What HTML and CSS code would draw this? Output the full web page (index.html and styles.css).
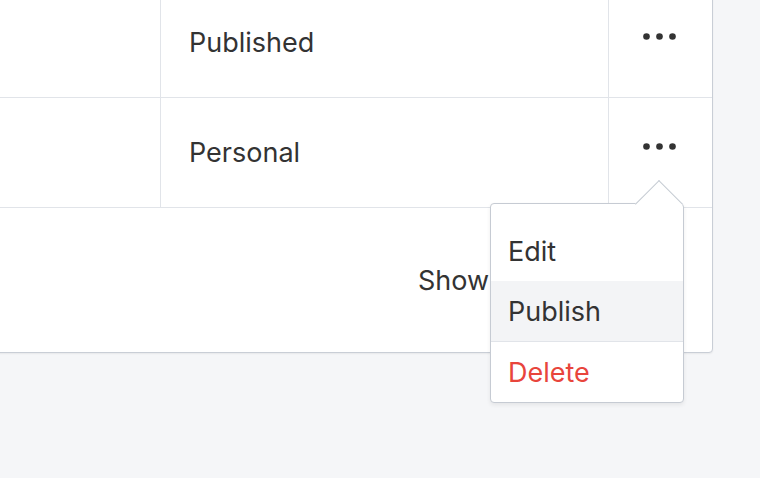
FILE: index.html
```html
<!DOCTYPE html>
<html>
<head>
  <meta charset="UTF-8">
  <title>Posts</title>
  <link rel="stylesheet" href="styles.css">
</head>
<body>
  <div class="card">
    <div class="row">
      <div class="cell"></div>
      <div class="cell status">Published</div>
      <div class="cell actions">
        <button class="more-btn" aria-label="More">
          <svg width="33" height="7" viewBox="0 0 33 7"><circle cx="3.5" cy="3.5" r="3.3"/><circle cx="16.5" cy="3.5" r="3.3"/><circle cx="29.5" cy="3.5" r="3.3"/></svg>
        </button>
      </div>
    </div>
    <div class="row">
      <div class="cell"></div>
      <div class="cell status">Personal</div>
      <div class="cell actions">
        <button class="more-btn" aria-label="More">
          <svg width="33" height="7" viewBox="0 0 33 7"><circle cx="3.5" cy="3.5" r="3.3"/><circle cx="16.5" cy="3.5" r="3.3"/><circle cx="29.5" cy="3.5" r="3.3"/></svg>
        </button>
        <div class="menu">
          <span class="menu-arrow"></span>
          <div class="menu-group first">
            <a class="menu-item">Edit</a>
            <a class="menu-item active">Publish</a>
          </div>
          <div class="menu-group">
            <a class="menu-item danger">Delete</a>
          </div>
        </div>
      </div>
    </div>
    <div class="card-footer">
      <span>Showing</span>
    </div>
  </div>
</body>
</html>
```

FILE: styles.css
```css
html,
body {
  height: 100%;
}

body {
  margin: 0;
  background: #f5f6f8;
  font-family: Inter, "Noto Sans", sans-serif;
  font-size: 27px;
  color: #333;
}

.card {
  box-sizing: border-box;
  width: 723px;
  margin: -13px 0 0 -10px;
  background: #fff;
  border: 1px solid #c9ced6;
  border-radius: 4px;
  box-shadow: 0 1px 2px rgba(0, 0, 0, 0.06);
}

.row {
  display: grid;
  grid-template-columns: 170px 448px 103px;
  height: 110px;
  border-bottom: 1px solid #e1e4e9;
  box-sizing: border-box;
}

.cell {
  display: flex;
  align-items: center;
  border-right: 1px solid #e1e4e9;
}

.cell.status {
  padding-left: 28px;
}

.cell.actions {
  border-right: none;
  justify-content: center;
  position: relative;
}

.more-btn {
  background: transparent;
  border: none;
  padding: 0 3px 0 0;
  margin-top: -12px;
  cursor: pointer;
  fill: #333;
  display: flex;
}

.card-footer {
  height: 144px;
  display: flex;
  align-items: center;
  padding-left: 427px;
}

.menu {
  position: absolute;
  top: 105px;
  right: 28px;
  width: 194px;
  box-sizing: border-box;
  background: #fff;
  border: 1px solid #c6cbd3;
  border-radius: 4px;
  box-shadow: 0 2px 4px rgba(0, 0, 0, 0.07);
  z-index: 2;
}

.menu-arrow {
  position: absolute;
  top: -17px;
  left: 151px;
  width: 34px;
  height: 34px;
  box-sizing: border-box;
  background: #fff;
  border-top: 1px solid #c6cbd3;
  border-left: 1px solid #c6cbd3;
  transform: rotate(45deg);
}

.menu-group {
  position: relative;
}

.menu-group.first {
  padding-top: 17px;
}

.menu-group + .menu-group {
  border-top: 1px solid #e1e4e9;
}

.menu-item {
  display: flex;
  align-items: center;
  height: 60px;
  padding-left: 17px;
  color: #333;
  cursor: pointer;
}

.menu-item.active {
  background: #f3f4f6;
}

.menu-item.danger {
  color: #e8453c;
}
```
